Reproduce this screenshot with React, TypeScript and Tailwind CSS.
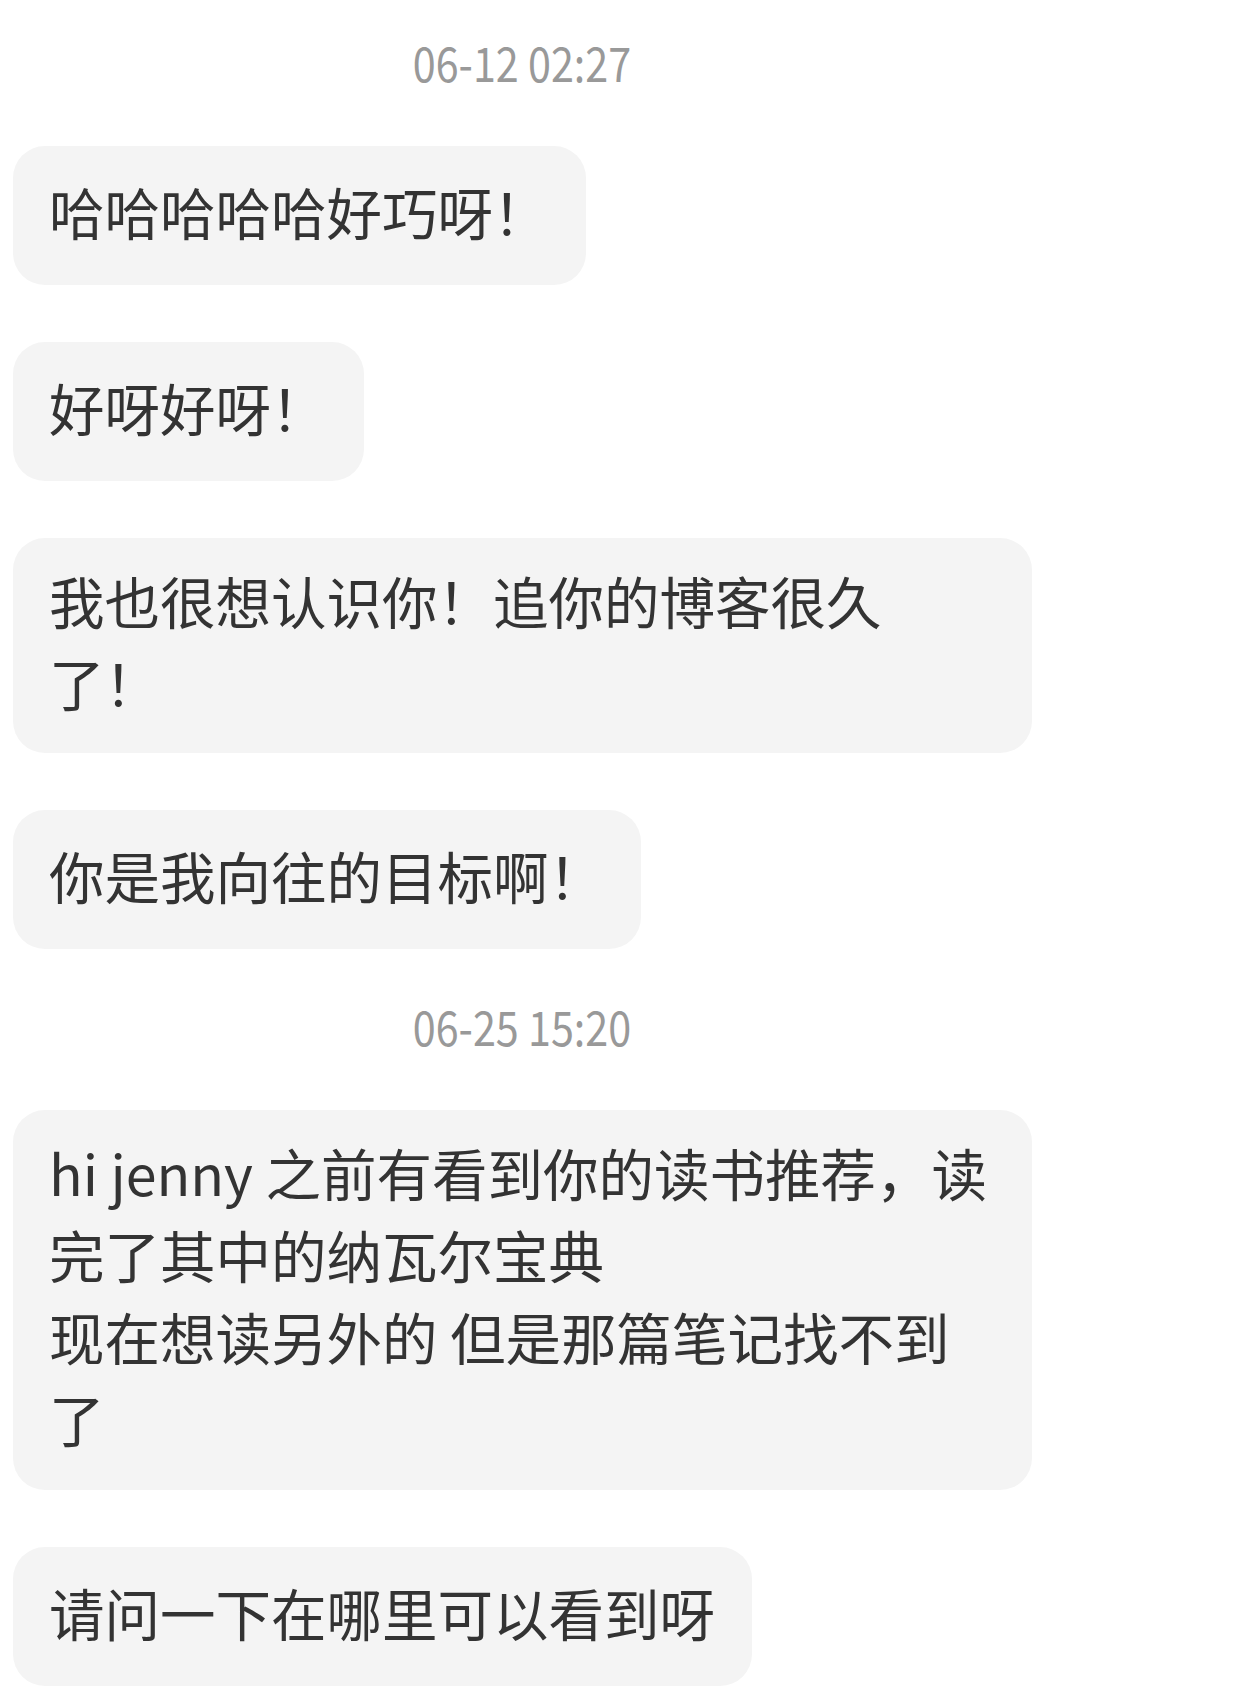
import React from "react";

const font = { fontFamily: '"Noto Sans CJK SC", "Noto Sans", sans-serif' };

function Stamp({ text, className }: { text: string; className: string }) {
  return (
    <div
      className={`w-[1044px] h-[46px] flex justify-center items-center text-[48px] leading-[46px] text-[#999999] ${className}`}
    >
      <span className="inline-block scale-x-[0.86]">{text}</span>
    </div>
  );
}

function Bubble({ text }: { text: string }) {
  return (
    <div className="self-start h-[139px] flex items-center pl-[36px] pr-[37px] pb-[10px] rounded-[32px] bg-[#f4f4f4] text-[55.5px] leading-[82px] text-[#333333] whitespace-nowrap">
      {text}
    </div>
  );
}

function MultiBubble({ lines, className }: { lines: string[]; className: string }) {
  return (
    <div
      className={`self-start w-[1019px] pl-[36px] pr-[37px] rounded-[32px] bg-[#f4f4f4] text-[55.5px] leading-[82px] text-[#333333] ${className}`}
    >
      {lines.map((l, i) => (
        <div key={i} className="whitespace-pre">
          {l}
        </div>
      ))}
    </div>
  );
}

export default function App() {
  return (
    <div className="w-[1243px] h-[1695px] bg-white overflow-hidden flex flex-col pt-[38px]" style={font}>
      <Stamp text="06-12 02:27" className="" />
      <div className="flex flex-col px-[13px] mt-[62px] gap-[57px]">
        <Bubble text="哈哈哈哈哈好巧呀！" />
        <Bubble text="好呀好呀！" />
        <MultiBubble lines={["我也很想认识你！追你的博客很久", "了！"]} className="pt-[21px] pb-[30px]" />
        <Bubble text="你是我向往的目标啊！" />
      </div>
      <Stamp text="06-25 15:20" className="mt-[53px]" />
      <div className="flex flex-col px-[13px] mt-[62px] gap-[57px]">
        <MultiBubble
          lines={[
            "hi jenny 之前有看到你的读书推荐，读",
            "完了其中的纳瓦尔宝典",
            "现在想读另外的 但是那篇笔记找不到",
            "了",
          ]}
          className="pt-[21px] pb-[31px]"
        />
        <Bubble text="请问一下在哪里可以看到呀" />
      </div>
    </div>
  );
}
